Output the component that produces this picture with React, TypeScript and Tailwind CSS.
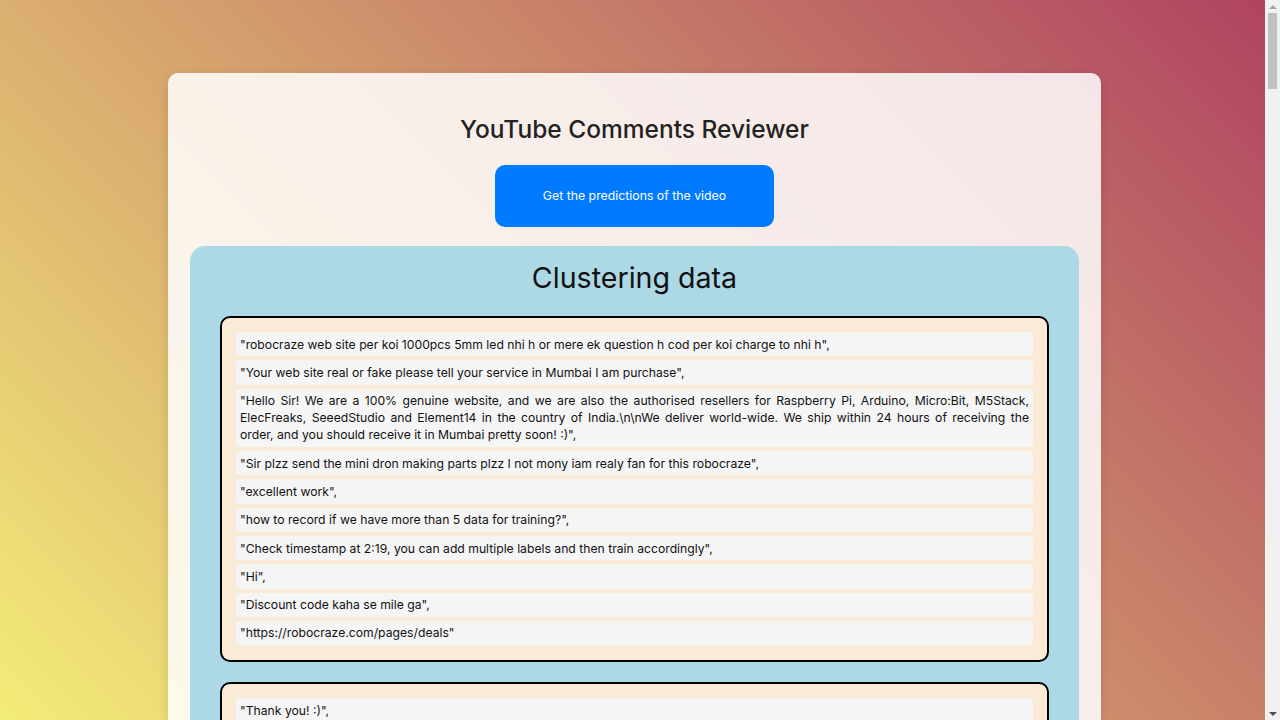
import React from 'react';

const clusters: string[][] = [
  [
    '"robocraze web site per koi 1000pcs 5mm led nhi h or mere ek question h cod per koi charge to nhi h",',
    '"Your web site real or fake please tell your service in Mumbai I am purchase",',
    '"Hello Sir! We are a 100% genuine website, and we are also the authorised resellers for Raspberry Pi, Arduino, Micro:Bit, M5Stack, ElecFreaks, SeeedStudio and Element14 in the country of India.\\n\\nWe deliver world-wide. We ship within 24 hours of receiving the order, and you should receive it in Mumbai pretty soon! :)",',
    '"Sir plzz send the mini dron making parts plzz I not mony iam realy fan for this robocraze",',
    '"excellent work",',
    '"how to record if we have more than 5 data for training?",',
    '"Check timestamp at 2:19, you can add multiple labels and then train accordingly",',
    '"Hi",',
    '"Discount code kaha se mile ga",',
    '"https://robocraze.com/pages/deals"',
  ],
  [
    '"Thank you! :)",',
    '"Very informative video, thanks for sharing",',
    '"Can we use this with ESP32 instead of Arduino?",',
    '"Yes, you can! The same steps apply for ESP32 boards as well.",',
    '"Nice explanation sir",',
    '"Please make a video on gesture recognition",',
    '"Great content, keep it up"',
  ],
  [
    '"Which camera module did you use in this project?",',
    '"We used the Raspberry Pi Camera Module V2 for this tutorial.",',
    '"Is the code available on GitHub?",',
    '"Link to the code is in the description",',
    '"Super video bhai",',
    '"Where can I buy the sensor kit?",',
    '"You can find it on our website under the kits section."',
  ],
  [
    '"Does this work offline?",',
    '"Yes, once the model is exported it runs completely offline.",',
    '"Awesome project for beginners",',
    '"What is the accuracy of the model?",',
    '"It depends on the amount and quality of the training data.",',
    '"Thanks a lot",',
    '"Subscribed!"',
  ],
  [
    '"Can you make a tutorial on object detection with TensorFlow Lite?",',
    '"Sure, it is on our list for upcoming videos!",',
    '"Very helpful for my college project",',
    '"Do you ship to Sri Lanka?",',
    '"Currently we ship only within India.",',
    '"Love from Kerala",',
    '"Good work team"',
  ],
];

function Cluster({ items }: { items: string[] }) {
  return (
    <div className="border-2 border-black rounded-[10px] bg-[#faebd7] px-[14px] pt-[14px] pb-[15px] flex flex-col gap-[4px]">
      {items.map((c, i) => (
        <p key={i} className="bg-[#f5f5f5] rounded-[4px] px-[4px] py-[3.67px] text-[12.2px] leading-[17px] text-justify text-[#111]">
          {c}
        </p>
      ))}
    </div>
  );
}

// browser scrollbar as seen in the screenshot
function Scrollbar() {
  return (
    <div className="fixed top-0 right-0 w-[15px] h-screen bg-[#f1f1f1] flex flex-col items-center">
      <div className="h-[13px] flex items-center justify-center">
        <div className="w-0 h-0 border-x-[4px] border-x-transparent border-b-[4px] border-b-[#a3a3a3]" />
      </div>
      <div className="w-[9px] h-[76px] bg-[#c1c1c1]" />
      <div className="flex-1" />
      <div className="h-[13px] flex items-center justify-center">
        <div className="w-0 h-0 border-x-[4px] border-x-transparent border-t-[4px] border-t-[#505050]" />
      </div>
    </div>
  );
}

export default function App() {
  return (
    <div className="min-h-screen bg-[linear-gradient(45deg,#f3ec78,#af4261)] bg-fixed pt-[73px] pb-[60px] pr-[11px] font-['Inter','Liberation_Sans',sans-serif]">
      <div className="mx-auto w-[933px] rounded-[10px] bg-white/85 shadow-[0_4px_12px_rgba(0,0,0,0.12)] px-[22px] pt-[36px] pb-[22px]">
        <h1 className="text-center text-[24.5px] leading-[40px] font-medium text-[#222]">YouTube Comments Reviewer</h1>
        <div className="flex justify-center mt-[16px]">
          <button className="w-[279px] h-[62px] rounded-[10px] bg-[#007bff] text-white text-[12.3px]">
            Get the predictions of the video
          </button>
        </div>
        <div className="mt-[19px] rounded-[15px] bg-[#add8e6] px-[30px] pt-[9px] pb-[30px]">
          <h2 className="text-center text-[28.6px] leading-[45px] text-[#111] mb-[16px]">Clustering data</h2>
          <div className="flex flex-col gap-[20px]">
            {clusters.map((items, i) => (
              <Cluster key={i} items={items} />
            ))}
          </div>
        </div>
      </div>
      <Scrollbar />
    </div>
  );
}
